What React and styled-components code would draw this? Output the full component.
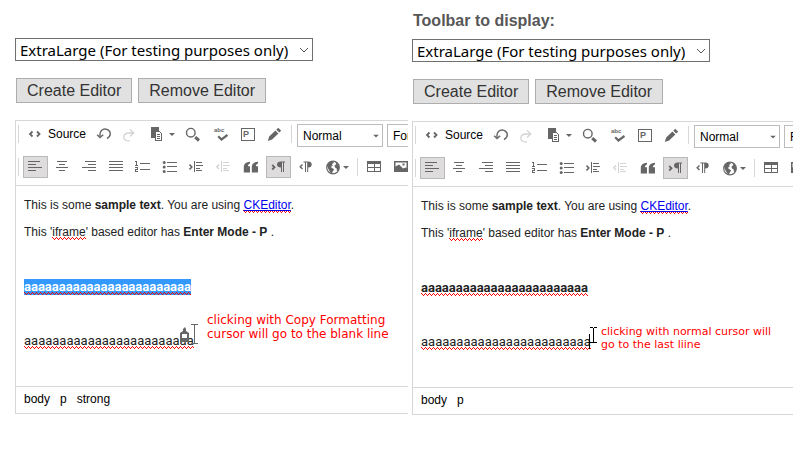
import React from 'react';
import styled, { createGlobalStyle, css } from 'styled-components';

const INK = '#666';
const LINE = '#d7d7d7';

const GlobalStyle = createGlobalStyle`
  *, *::before, *::after { box-sizing: border-box; }
  body {
    margin: 0;
    background: #fff;
    color: #000;
    font-family: "Liberation Sans", Arial, sans-serif;
    font-size: 12px;
  }
`;

const Page = styled.main`
  display: grid;
  grid-template-columns: 393fr 381fr;
  gap: 4px;
  padding: 0 7px 24px 15px;
`;

const Pane = styled.section`
  min-width: 0;
  overflow: hidden;
  padding-top: ${(p) => (p.$titled ? 9 : 38)}px;
`;

const Title = styled.label`
  display: block;
  height: 30px;
  padding-left: 1px;
  color: #575757;
  font-size: 16px;
  font-weight: bold;
  line-height: 24px;
`;

const SelectBox = styled.div`
  position: relative;
  width: fit-content;
`;

const SelectArrow = styled.svg`
  position: absolute;
  right: 4px;
  top: 50%;
  transform: translateY(-50%);
  pointer-events: none;
`;

const ToolbarSelect = styled.select`
  display: block;
  appearance: none;
  width: 298px;
  height: 23px;
  margin: 0;
  padding: 0 4px;
  border: 1px solid #707070;
  border-radius: 0;
  background: #fff;
  color: #000;
  font-family: "Noto Sans", sans-serif;
  font-size: 15px;
  line-height: 20px;
`;

const Actions = styled.div`
  display: flex;
  gap: 6px;
  margin: 17px 0 17px 1px;
`;

const ActionButton = styled.button`
  height: 25px;
  padding: 0 10px;
  border: 1px solid #adadad;
  background: #e1e1e1;
  color: #333;
  font-family: inherit;
  font-size: 16px;
  line-height: 22px;
  white-space: nowrap;
`;

const Editor = styled.div`
  border: 1px solid ${LINE};
  border-right: 0;
`;

const Toolbar = styled.div`
  display: flex;
  flex-direction: column;
  gap: 9px;
  padding: 2px 0 7px 2px;
  border-bottom: 1px solid ${LINE};
  overflow: hidden;
`;

const ToolRow = styled.div`
  display: flex;
  align-items: flex-start;
`;

const Separator = styled.span`
  flex: none;
  width: 1px;
  height: 18px;
  margin: ${(p) => (p.$inner ? '2px 3px 0' : '2px 3px 0 0')};
  background: ${LINE};
`;

const ToolButton = styled.button`
  flex: none;
  display: flex;
  align-items: center;
  gap: ${(p) => (p.$labelled ? 5 : 3)}px;
  width: ${(p) => (p.$wide ? 'auto' : '25px')};
  height: 22px;
  margin: 0 1px;
  padding: 0 3px;
  border: 1px solid transparent;
  background: none;
  color: ${INK};
  font-family: inherit;
  font-size: 12px;
  ${(p) => p.$active && css`
    background: #dfdcdd;
    border-color: #b9b9b9;
  `}
  svg { flex: none; display: block; }
  &:disabled { color: #d4d4d4; }
`;

const ButtonText = styled.span`
  color: #000;
  line-height: 18px;
`;

const ComboBox = styled.div`
  position: relative;
  flex: none;
  margin: 1px 2px 0;
`;

const Combo = styled.select`
  display: block;
  appearance: none;
  width: 86px;
  height: 23px;
  margin: 0;
  padding: 0 5px;
  border: 1px solid #bcbcbc;
  border-radius: 0;
  background: #fff;
  color: #000;
  font-family: inherit;
  font-size: 12px;
`;

const Content = styled.div`
  position: relative;
  min-height: 200px;
  padding: 12px 8px 26px;
  color: #222;
  line-height: 15px;
  white-space: nowrap;
`;

const Paragraph = styled.p`
  height: 15px;
  margin: 0 0 12px;
`;

const SampleParagraph = styled(Paragraph)`
  font-family: Roboto, "Liberation Sans", sans-serif;
  font-size: 13px;
`;

const Link = styled.a`
  color: #0000ee;
`;

const Misspelled = styled.span`
  padding-bottom: 1px;
  background-color: ${(p) => (p.$selected ? '#3399ff' : 'transparent')};
  color: ${(p) => (p.$selected ? '#fff' : 'inherit')};
  font-weight: ${(p) => (p.$bold ? 'bold' : 'inherit')};
  background-image:
    linear-gradient(90deg, #f00 1px, transparent 1px),
    linear-gradient(90deg, #f00 1px, transparent 1px),
    linear-gradient(90deg, #f00 1px, transparent 1px);
  background-size: 4px 1px, 2px 1px, 4px 1px;
  background-position: 0 calc(100% - 2px), 1px calc(100% - 1px), 2px 100%;
  background-repeat: repeat-x;
`;

const Note = styled.p`
  position: absolute;
  left: ${(p) => p.$left}px;
  top: ${(p) => p.$top}px;
  margin: 0;
  color: #f00;
  font-family: "DejaVu Sans", sans-serif;
  font-size: ${(p) => p.$size}px;
  line-height: ${(p) => p.$line}px;
`;

const Pointer = styled.svg`
  position: absolute;
  left: ${(p) => p.$left}px;
  top: ${(p) => p.$top}px;
`;

const Status = styled.nav`
  display: flex;
  gap: 10px;
  height: 27px;
  padding: 0 8px;
  border-top: 1px solid ${LINE};
  line-height: 24px;
`;

const StatusItem = styled.a`
  color: #000;
  text-decoration: none;
`;

const Icon = ({ children, crisp }) => (
  <svg width="16" height="16" viewBox="0 0 16 16" fill="none" stroke="currentColor"
    shapeRendering={crisp ? 'crispEdges' : 'auto'} aria-hidden="true">
    {children}
  </svg>
);

const Solid = (props) => <path fill="currentColor" stroke="none" {...props} />;

const Caret = () => (
  <svg width="6" height="3" viewBox="0 0 6 3" aria-hidden="true">
    <path d="M0 0h6L3 3z" fill={INK} />
  </svg>
);

const icons = {
  source: <Icon><path strokeWidth="1.800" d="M5.500 5.500 3 8l2.500 2.500M10 5.500 12.500 8 10 10.500" /></Icon>,
  undo: (
    <Icon>
      <path strokeWidth="1.400" d="M4 10.500V8.200C4 5 6.300 3 9 3s5.300 2 5.300 4.800c0 2.200-1.200 3.700-3.300 4.700" />
      <path strokeWidth="1.400" d="M1.200 8.800 4 11.600l3.200-2.800" />
    </Icon>
  ),
  redo: (
    <Icon>
      <path strokeWidth="1.300" d="M10 7H6C3 7 .8 8.700 .8 11S3 15 6.800 15" />
      <path strokeWidth="1.300" d="M7 3.300 10.700 7 7 10.500" />
    </Icon>
  ),
  paste: (
    <Icon crisp>
      <Solid d="M1 1h8v4H5v7H1z" />
      <path fill="#fff" d="M5.500 5.500h4l1.500 1.500v7.500H5.500z" />
      <path d="M7 8.500h3M7 10.500h3M7 12.500h3" />
    </Icon>
  ),
  find: (
    <Icon>
      <circle cx="5.800" cy="6.700" r="4.300" strokeWidth="1.400" />
      <path strokeWidth="3" d="m10.200 11.200 3.800 3.300" />
    </Icon>
  ),
  spell: (
    <Icon>
      <text x="2" y="6" fontSize="6" fontWeight="bold" fontFamily="Liberation Sans, sans-serif" fill="currentColor" stroke="none">abc</text>
      <path strokeWidth="2.200" d="m6.200 10.200 3.300 3.300L15.500 9" />
    </Icon>
  ),
  block: (
    <Icon>
      <path shapeRendering="crispEdges" d="M2.500 2.500h13v12h-13z" />
      <text x="4" y="11" fontSize="9" fontWeight="bold" fontFamily="Liberation Sans, sans-serif" fill="currentColor" stroke="none">P</text>
    </Icon>
  ),
  pencil: (
    <Icon>
      <Solid d="m1.800 15 1.400-4.500 6.200-6 3 3-6.300 5.900zM10.300 3.700 12.200 1.800l3 2.900-1.900 1.900z" />
    </Icon>
  ),
  left: <Icon crisp><path d="M1 2.500h12M1 5.500h8M1 8.500h14M1 11.500h8" /></Icon>,
  center: <Icon crisp><path d="M3 2.500h10M5 5.500h6M2 8.500h12M5 11.500h6" /></Icon>,
  right: <Icon crisp><path d="M4 2.500h11M7 5.500h8M1 8.500h14M7 11.500h8" /></Icon>,
  justify: <Icon crisp><path d="M1 2.500h14M1 5.500h14M1 8.500h14M1 11.500h14" /></Icon>,
  numbered: (
    <Icon crisp>
      <path d="M5 4.500h10M5 10.500h10M0 2.500h1.500V7M0 6.500h3M0 8.500h2.500v2H.500v2H3" />
    </Icon>
  ),
  bulleted: (
    <Icon>
      <path shapeRendering="crispEdges" d="M5 3.500h10M5 7.500h10M5 12.500h10" />
      <g fill="currentColor" stroke="none">
        <circle cx="2.200" cy="3.500" r="1.500" />
        <circle cx="2.200" cy="8" r="1.500" />
        <circle cx="2.200" cy="12.500" r="1.500" />
      </g>
    </Icon>
  ),
  indent: (
    <Icon>
      <path shapeRendering="crispEdges" d="M5.500 2v11M7 3.500h6M7 6.500h7M7 9.500h4M7 11.500h6" />
      <path strokeWidth="1.600" d="M.5 5.500 2.800 8 .5 10.500" />
    </Icon>
  ),
  outdent: (
    <Icon>
      <path shapeRendering="crispEdges" d="M5.500 2v11M7 3.500h6M7 6.500h7M7 9.500h4M7 11.500h6" />
      <path strokeWidth="1.400" d="M3 5.500.8 7.800 3 10" />
    </Icon>
  ),
  quote: (
    <Icon>
      <Solid d="M7 2.800v1.800C5.600 5 5 5.900 5 7.300h2v6.200H.800V8C.800 5 3 3 7 2.800zM15 2.800v1.800c-1.400.4-2 1.300-2 2.700h2v6.200H8.800V8c0-3 2.200-5 6.200-5.200z" />
    </Icon>
  ),
  ltr: (
    <Icon>
      <Solid d="M10.500 2.500H15v1h-1V13h-1V3.500h-1V13h-1V8.500C8.500 8.500 7 7.400 7 5.500s1.500-3 3.500-3z" />
      <path strokeWidth="1.800" d="M2.200 6 4.500 8.200 2.200 10.500" />
    </Icon>
  ),
  rtl: (
    <Icon>
      <Solid d="M6.500 2.500h4.700c2.500 0 3.500 1.200 3.500 3s-1 3-3.500 3V13h-1V3.500H9V13H8V3.500H6.500z" />
      <path strokeWidth="1.400" d="M5.500 5.500 3.200 7.700l2.300 2.200" />
    </Icon>
  ),
  globe: (
    <Icon>
      <circle cx="9" cy="8.500" r="6.300" strokeWidth="1.200" />
      <Solid d="M3 6.500C4 3.500 6 2.300 8.700 2.200l1.300 1.500-2 1.400.7 1.400-2 1.500 1.800 1.300 1.700 1.200-1.500 2L8 14.800C5.500 13.500 5.300 10.800 4 9.500zM11.500 3l2.500 1.700 1.300 3.500-.500 3-1.800.8-.500-2.800-1.500-.7-.500-2 1.800-1.300z" />
    </Icon>
  ),
  table: (
    <Icon crisp>
      <Solid d="M1 2h14v3H1z" />
      <path d="M1.500 4.500h13v8h-13zM8 5v8M1.500 8.500h13" />
    </Icon>
  ),
  image: (
    <Icon>
      <path fill="currentColor" stroke="none" fillRule="evenodd" d="M1 2h14v11H1zM2.500 3.500v4L6 5.500l4 4 3-1 .5 1v-6zM9.500 4.500h2v2h-2z" />
    </Icon>
  ),
};

const firstRow = [
  { id: 'undo', label: 'Undo' },
  { id: 'redo', label: 'Redo', disabled: true },
  { id: 'paste', label: 'Paste', menu: true },
  { id: 'find', label: 'Find' },
  { id: 'spell', label: 'Spell Check As You Type' },
  { id: 'block', label: 'Show Blocks' },
  { id: 'pencil', label: 'Copy Formatting' },
];

const secondRow = [
  { id: 'left', label: 'Align Left', active: true },
  { id: 'center', label: 'Center' },
  { id: 'right', label: 'Align Right' },
  { id: 'justify', label: 'Justify' },
  { id: 'numbered', label: 'Numbered List' },
  { id: 'bulleted', label: 'Bulleted List' },
  { id: 'indent', label: 'Increase Indent' },
  { id: 'outdent', label: 'Decrease Indent', disabled: true },
  { id: 'quote', label: 'Block Quote' },
  { id: 'ltr', label: 'Text direction from left to right', active: true },
  { id: 'rtl', label: 'Text direction from right to left' },
  { id: 'globe', label: 'Set language', menu: true },
];

const insertTools = [
  { id: 'table', label: 'Table' },
  { id: 'image', label: 'Image' },
];

const Tools = ({ items }) => items.map((t) => (
  <ToolButton key={t.id} type="button" aria-label={t.label} aria-pressed={t.active}
    disabled={t.disabled} $active={t.active} $wide={t.menu}>
    {icons[t.id]}
    {t.menu && <Caret />}
  </ToolButton>
));

const ComboField = ({ label, value }) => (
  <ComboBox>
    <Combo aria-label={label} defaultValue={value}><option>{value}</option></Combo>
    <SelectArrow width="6" height="3" viewBox="0 0 6 3" aria-hidden="true">
      <path d="M0 0h6L3 3z" fill={INK} />
    </SelectArrow>
  </ComboBox>
);

const word = 'a'.repeat(24);

function EditorPane({ id, title, selected, path, children }) {
  return (
    <Pane $titled={Boolean(title)}>
      {title && <Title htmlFor={id}>{title}</Title>}
      <SelectBox>
        <ToolbarSelect id={id} aria-label={title ? undefined : 'Toolbar'}>
          <option>ExtraLarge (For testing purposes only)</option>
        </ToolbarSelect>
        <SelectArrow width="10" height="6" viewBox="0 0 10 6" aria-hidden="true">
          <path d="m1 1 4 4 4-4" fill="none" stroke="#555" />
        </SelectArrow>
      </SelectBox>
      <Actions>
        <ActionButton type="button">Create Editor</ActionButton>
        <ActionButton type="button">Remove Editor</ActionButton>
      </Actions>
      <Editor>
        <Toolbar role="toolbar" aria-label="Editor toolbar">
          <ToolRow>
            <Separator />
            <ToolButton type="button" $wide $labelled>
              {icons.source}
              <ButtonText>Source</ButtonText>
            </ToolButton>
            <Tools items={firstRow} />
            <Separator $inner />
            <ComboField label="Paragraph format" value="Normal" />
            <ComboField label="Font name" value="Font" />
          </ToolRow>
          <ToolRow>
            <Separator />
            <Tools items={secondRow} />
            <Separator $inner />
            <Tools items={insertTools} />
          </ToolRow>
        </Toolbar>
        <Content>
          <Paragraph>
            This is some <strong>sample text</strong>. You are using{' '}
            <Link href="#ckeditor"><Misspelled>CKEditor</Misspelled></Link>.
          </Paragraph>
          <Paragraph>
            This '<Misspelled>iframe</Misspelled>' based editor has <strong>Enter Mode - P</strong> .
          </Paragraph>
          <Paragraph />
          <SampleParagraph><Misspelled $bold $selected={selected}>{word}</Misspelled></SampleParagraph>
          <Paragraph />
          <SampleParagraph><Misspelled>{word}</Misspelled></SampleParagraph>
          {children}
        </Content>
        <Status aria-label="Elements path">
          {path.map((name) => <StatusItem key={name} href={`#${name}`}>{name}</StatusItem>)}
        </Status>
      </Editor>
    </Pane>
  );
}

export default function App() {
  return (
    <>
      <GlobalStyle />
      <Page>
        <EditorPane id="toolbar-a" selected path={['body', 'p', 'strong']}>
          <Pointer $left={164} $top={138} width="20" height="21" viewBox="0 0 20 21" aria-hidden="true">
            <path d="M3 5l2-2 1 2v2l3 2v9H0V9l3-2z" fill={INK} />
            <path d="M2 10h5v4H2z" fill="#fff" />
            <path d="M11 .500h7M14.500 1v18M11 19.500h7" fill="none" stroke={INK} shapeRendering="crispEdges" />
          </Pointer>
          <Note $left={191} $top={127} $size={12} $line={14}>
            clicking with Copy Formatting<br />cursor will go to the blank line
          </Note>
        </EditorPane>
        <EditorPane id="toolbar-b" title="Toolbar to display:" path={['body', 'p']}>
          <Pointer $left={176} $top={140} width="10" height="24" viewBox="0 0 10 24" aria-hidden="true">
            <path d="M.500 7v15M1 .500h3M5 .500h3M4.500 1v15M1 15.500h3M5 15.500h3" fill="none" stroke="#000" shapeRendering="crispEdges" />
          </Pointer>
          <Note $left={188} $top={138} $size={11} $line={13}>
            clicking with normal cursor will<br />go to the last liine
          </Note>
        </EditorPane>
      </Page>
    </>
  );
}
